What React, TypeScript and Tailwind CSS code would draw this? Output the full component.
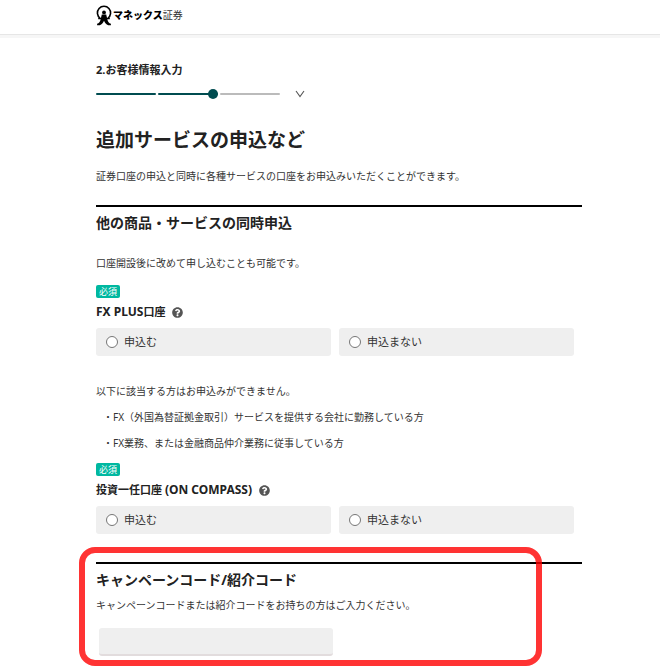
import React from 'react';
import { FaQuestionCircle } from 'react-icons/fa';

interface AccountChoiceProps {
  name: string;
  label: React.ReactNode;
}

const MonexLogo: React.FC = () => (
  <a href="#" className="flex items-center gap-px text-black" aria-label="マネックス証券">
    <svg className="h-[22px] w-4" viewBox="0 0 16 22" fill="none" aria-hidden="true">
      <path d="M4.200 14.300A6.600 6.600 0 1 1 11.800 14.300" stroke="currentColor" strokeWidth="1.6" />
      <circle cx="8" cy="8.4" r="1.9" fill="currentColor" />
      <path
        d="M5.800 10.600h4.400l1.200 4.800c.5 2.200 1.500 3.800 3.500 4.400v1.500h-2.700c-2-.7-3.300-2.300-4.200-4.500-.9 2.200-2.200 3.800-4.200 4.500H1.100v-1.500c2-.6 3-2.200 3.500-4.400z"
        fill="currentColor"
      />
      <path d="M2.200 14.600h3.200M10.600 14.600h3.200" stroke="currentColor" strokeWidth="1.4" />
    </svg>
    <span className="text-[10px] leading-5">
      <span className="font-black">マネックス</span>
      <span className="text-[#333333]">証券</span>
    </span>
  </a>
);

const StepProgress: React.FC = () => (
  <div className="mt-[9px] flex h-[10px] items-center">
    <div className="flex items-center gap-[2px]">
      <div className="h-[2px] w-[60px] rounded-full bg-[#004c50]" />
      <div className="relative h-[2px] w-[60px] rounded-full bg-[#004c50]">
        <span className="absolute -top-[4px] right-0 size-[10px] rounded-full bg-[#004c50]" />
      </div>
      <div className="h-[2px] w-[60px] rounded-full bg-[#bbbbbb]" />
    </div>
    <button type="button" className="ml-[15px] text-[#555555]" aria-label="ステップ一覧">
      <svg className="h-[8px] w-[10px]" viewBox="0 0 10 8" fill="none" aria-hidden="true">
        <path d="M1 1l4 5.500L9 1" stroke="currentColor" strokeWidth="1.1" />
      </svg>
    </button>
  </div>
);

const SectionTitle: React.FC<{ children: React.ReactNode }> = ({ children }) => (
  <div className="border-t-2 border-black pt-1">
    <h2 className="text-[14px] leading-6 font-bold">{children}</h2>
  </div>
);

const AccountChoice: React.FC<AccountChoiceProps> = ({ name, label }) => (
  <fieldset>
    <legend>
      <span className="block h-[13px] w-6 rounded-xs bg-[#00b8a0] text-center text-[9px] leading-[13px] text-white">
        必須
      </span>
      <span className="mt-1 flex items-center gap-[7px] text-[11px] leading-5 font-bold">
        <span>{label}</span>
        <button type="button" className="text-[#555555]" aria-label="口座の説明">
          <FaQuestionCircle className="size-[11px]" />
        </button>
      </span>
    </legend>
    <div className="mt-[6px] mr-2 grid grid-cols-2 gap-2">
      {['申込む', '申込まない'].map((option) => (
        <label
          key={option}
          className="flex h-7 items-center gap-[6px] rounded-[3px] bg-[#efefef] pl-[10px] text-[11px] text-[#333333]"
        >
          <input
            type="radio"
            name={name}
            value={option}
            className="size-3 appearance-none rounded-full border border-[#767676] bg-white checked:border-4 checked:border-[#004c50]"
          />
          {option}
        </label>
      ))}
    </div>
  </fieldset>
);

const App: React.FC = () => {
  return (
    <div
      lang="ja"
      className="min-h-screen bg-white pb-[15px] font-['Noto_Sans','Noto_Sans_CJK_JP',sans-serif] text-[10px] leading-5 text-[#222222]"
    >
      <header className="flex h-[35px] items-start border-b border-[#e6e6e6] pt-1 pl-24 shadow-[0_3px_0_#f6f6f6]">
        <MonexLogo />
      </header>

      <main className="pt-[25px] pr-[78px] pl-24">
        <p className="text-[11px] leading-5 font-bold">2.お客様情報入力</p>
        <StepProgress />

        <h1 className="mt-[25px] text-[19px] leading-8 font-bold">追加サービスの申込など</h1>
        <p className="mt-[10px] text-[#333333]">
          証券口座の申込と同時に各種サービスの口座をお申込みいただくことができます。
        </p>

        <section className="mt-[19px]">
          <SectionTitle>他の商品・サービスの同時申込</SectionTitle>
          <p className="mt-[18px] mb-3 text-[#333333]">口座開設後に改めて申し込むことも可能です。</p>
          <AccountChoice
            name="fx"
            label={
              <>
                <span className="text-[12px]">FX PLUS</span>口座
              </>
            }
          />

          <p className="mt-[25px] text-[#333333]">以下に該当する方はお申込みができません。</p>
          <ul className="mt-[6px] mb-[10px] space-y-[6px] pl-[7px] text-[#333333]">
            <li>・FX（外国為替証拠金取引）サービスを提供する会社に勤務している方</li>
            <li>・FX業務、または金融商品仲介業務に従事している方</li>
          </ul>
          <AccountChoice
            name="compass"
            label={
              <>
                投資一任口座 <span className="text-[12px]">(ON COMPASS)</span>
              </>
            }
          />
        </section>

        <section className="relative mt-7">
          <SectionTitle>
            <label htmlFor="campaign-code">キャンペーンコード/紹介コード</label>
          </SectionTitle>
          <p className="mt-[3px] text-[#333333]">
            キャンペーンコードまたは紹介コードをお持ちの方はご入力ください。
          </p>
          <input
            id="campaign-code"
            type="text"
            className="mt-[13px] ml-[3px] block h-7 w-[234px] rounded-[3px] border-b-2 border-[#e2dcdd] bg-[#efefef] px-2 text-[11px]"
          />
          {/* highlight frame */}
          <div className="pointer-events-none absolute -top-[15px] right-10 -bottom-[10px] -left-[17px] rounded-2xl border-6 border-[#ff0000]/80" />
        </section>
      </main>
    </div>
  );
};

export default App;
